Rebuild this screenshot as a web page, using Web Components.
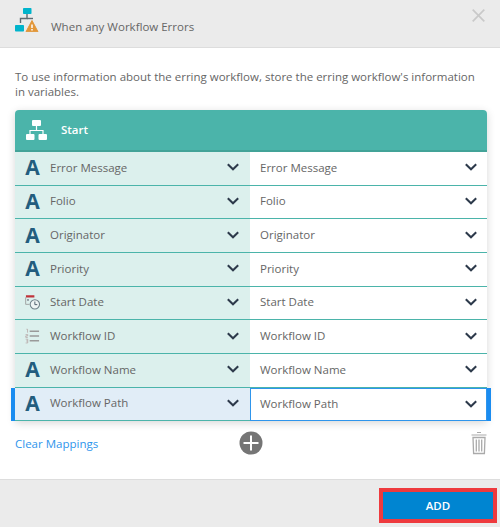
<!DOCTYPE html>
<html><head><meta charset="utf-8">
<style>
html,body{margin:0;padding:0;background:#fff}
body{font-family:"Open Sans",sans-serif;color:#666}
</style></head><body>
<template id="t-dialog">
<style>
:host{display:flex;flex-direction:column;width:500px;height:527px;background:#fff;overflow:hidden}
header{height:47px;flex:none;background:#ebebeb;border-bottom:1px solid #ddd;display:flex;align-items:flex-start;padding:0 15px;box-sizing:content-box}
header svg.logo{margin-top:7px;flex:none}
header span{margin:19px 0 0 12px;font-size:11.5px;line-height:16px;color:#666;flex:1}
header svg.x{margin:9px 0 0 0;flex:none}
main{flex:1;padding:21px 13px 0 15px;min-height:0}
p{margin:0 0 11px;font-size:11.5px;line-height:15px;color:#666}
.actions{display:grid;grid-template-columns:1fr auto 1fr;align-items:center;margin-top:8px;height:28px}
.clear{font-size:11.5px;color:#2e95ec}
.trash{justify-self:end}
footer{height:48px;box-sizing:border-box;flex:none;background:#ebebeb;border-top:1px solid #ddd;display:flex;justify-content:flex-end;align-items:flex-start;padding:8px 3px 0 0}
button{font:600 11.5px/25px "Open Sans",sans-serif;color:#fff;background:#0085d1;border:4px solid #ee3a3e;width:118px;height:35px;padding:0 0 1px;box-sizing:border-box;outline:0}
</style>
<header>
<svg class="logo" width="24" height="25" viewBox="0 0 24 25"><rect x="8" y="1" width="8.5" height="6" rx=".8" fill="#00b4cc"/><path d="M12 7v4.5H5.5V16" fill="none" stroke="#5d6b72" stroke-width="1.4"/><path d="M12 11.5h6" stroke="#5d6b72" stroke-width="1.4"/><rect x="0" y="18" width="9" height="6.5" rx=".8" fill="#00b4cc"/><path d="M17 13.5 23 24.8H11Z" fill="#e2973a" stroke="#e2973a" stroke-linejoin="round"/><path d="M17 17.5v3.5M17 22v1.4" stroke="#fff" stroke-width="1.5"/></svg>
<span>When any Workflow Errors</span>
<svg class="x" width="13" height="13" viewBox="0 0 13 13"><path d="M.7.7l11.6 11.6M12.3.7.7 12.3" stroke="#c9c9c9" stroke-width="1.7" fill="none"/></svg>
</header>
<main>
<p>To use information about the erring workflow, store the erring workflow's information in variables.</p>
<slot></slot>
<div class="actions"><span class="clear">Clear Mappings</span>
<svg width="24" height="24" viewBox="0 0 24 24"><circle cx="12" cy="12" r="11.5" fill="#757575"/><path d="M12 4.5v15M4.5 12h15" stroke="#fff" stroke-width="2"/></svg>
<svg class="trash" width="16" height="24" viewBox="0 0 16 24"><path d="M6 1.5h4M.5 4h15" stroke="#aaa" stroke-width="1.2" fill="none"/><path d="M2 6.5h12l-.6 16H2.6Z" fill="none" stroke="#aaa" stroke-width="1.3"/><path d="M5.3 8.5v12M8 8.5v12M10.7 8.5v12" stroke="#aaa" stroke-width="1.3"/></svg>
</div>
</main>
<footer><button>ADD</button></footer>
</template>

<template id="t-table">
<style>
:host{display:block;border-radius:4px 4px 0 0;box-shadow:0 2px 8px rgba(0,0,0,.16)}
.head{height:40px;background:#4bb4aa;border-bottom:2px solid #43a398;border-radius:4px 4px 0 0;display:flex;align-items:center;padding-left:11px;color:#fff;font-size:11.5px;font-weight:600}
.head span{margin-bottom:2px}
svg{margin-right:14px}
</style>
<div class="head">
<svg width="21" height="20" viewBox="0 0 21 20"><rect x="6" y="0" width="9" height="6" rx="1" fill="#fff"/><path d="M10.5 6v4.5M4 14v-3.5h13V14" fill="none" stroke="#fff" stroke-width="1.2"/><rect x="0" y="14" width="8.5" height="6" rx="1" fill="#fff"/><rect x="12.5" y="14" width="8.5" height="6" rx="1" fill="#fff"/></svg>
<span>Start</span></div>
<slot></slot>
</template>

<template id="t-row">
<style>
:host{display:grid;grid-template-columns:235px 237px;height:33.67px;box-sizing:border-box;font-size:11.5px;color:#666}
:host([selected]){margin:0 -4px;border-left:4px solid #1a8cf0;border-right:4px solid #1a8cf0}
.c{display:flex;align-items:center;box-sizing:border-box;border-bottom:1px solid #4bb4aa;min-width:0}
.l{background:#dcf0ed;padding:0 11px 2px 10px;border-bottom-width:1.5px}
.r{background:#fff;padding:0 10px 2px 10px}
:host([selected]) .l{background:#e1edf7}
:host([selected]) .r{border:1px solid #2e95ec;padding:0 9px 1px 9px}
.i{width:15px;height:16px;flex:none;display:flex;align-items:center;justify-content:center;margin-right:10px}
.t{flex:1;white-space:nowrap}
.chev{flex:none;margin-left:auto}
</style>
<div class="c l"><span class="i"><slot name="icon"></slot></span><span class="t"></span><svg class="chev" width="12" height="8" viewBox="0 0 12 8"><path d="M.8 1.2 6 6.3l5.2-5.1" fill="none" stroke="#2d3a4b" stroke-width="2"/></svg></div>
<div class="c r"><span class="t"></span><svg class="chev" width="12" height="8" viewBox="0 0 12 8"><path d="M.8 1.2 6 6.3l5.2-5.1" fill="none" stroke="#2d3a4b" stroke-width="2"/></svg></div>
</template>

<template id="t-a"><style>:host{display:inline-block;font:700 21px/16px "Open Sans",sans-serif;color:#235d7e}</style>A</template>

<wf-dialog>
<wf-table>
<wf-row label="Error Message"><wf-a slot="icon"></wf-a></wf-row>
<wf-row label="Folio"><wf-a slot="icon"></wf-a></wf-row>
<wf-row label="Originator"><wf-a slot="icon"></wf-a></wf-row>
<wf-row label="Priority"><wf-a slot="icon"></wf-a></wf-row>
<wf-row label="Start Date"><svg slot="icon" width="16" height="16" viewBox="0 0 16 16"><path d="M1 2h9" stroke="#c0333a" stroke-width="2.4"/><path d="M.7 3v7.5h4" fill="none" stroke="#999" stroke-width=".9"/><rect x="2.4" y="5" width="1.6" height="1.6" fill="#667"/><circle cx="10.5" cy="10.5" r="5" fill="#eef4f4" stroke="#6f7f88" stroke-width="1.1"/><path d="M10.5 7.5v3.3h2.6" fill="none" stroke="#4a5a66" stroke-width="1"/></svg></wf-row>
<wf-row label="Workflow ID"><svg slot="icon" width="16" height="16" viewBox="0 0 16 16"><path d="M5 3h10M5 8h10M5 13h10" stroke="#9a9a9a" stroke-width="1.6"/><path d="M1.5 .8h1.2v3.6M.6 6.5h2.3v1.4H.8v1.6h2.2M.7 11.4h2.2v4H.7M1.2 13.3h1.7" fill="none" stroke="#b09a9a" stroke-width=".7"/></svg></wf-row>
<wf-row label="Workflow Name"><wf-a slot="icon"></wf-a></wf-row>
<wf-row label="Workflow Path" selected><wf-a slot="icon"></wf-a></wf-row>
</wf-table>
</wf-dialog>
<script>
function shadow(el,id){el.attachShadow({mode:'open'}).appendChild(document.getElementById(id).content.cloneNode(true));}
customElements.define('wf-dialog',class extends HTMLElement{constructor(){super();shadow(this,'t-dialog')}});
customElements.define('wf-table',class extends HTMLElement{constructor(){super();shadow(this,'t-table')}});
customElements.define('wf-a',class extends HTMLElement{constructor(){super();shadow(this,'t-a')}});
customElements.define('wf-row',class extends HTMLElement{constructor(){super();shadow(this,'t-row')}
connectedCallback(){this.shadowRoot.querySelectorAll('.t').forEach(t=>t.textContent=this.getAttribute('label'))}});
</script>
</body></html>
